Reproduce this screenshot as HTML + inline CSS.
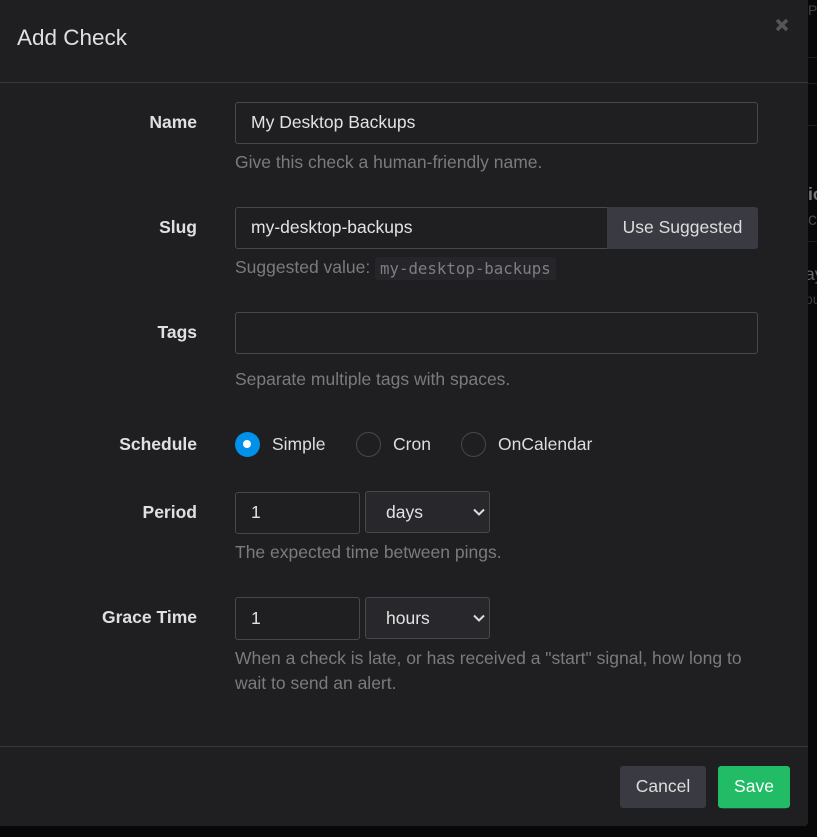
<!DOCTYPE html>
<html><head><meta charset="utf-8"><style>
html,body{margin:0;padding:0;width:817px;height:837px;overflow:hidden;background:#080808;font-family:"Liberation Sans",sans-serif;font-size:17.5px;color:#ddd}
.a{position:absolute;white-space:nowrap;line-height:24px}
#m{position:absolute;left:0;top:-10px;width:808px;height:836px;background:#1f1f21;border-radius:0 0 4px 0}
.h{position:absolute;left:0;width:808px;height:1px;background:#39393c}
.l{font-weight:bold;right:620px;color:#e0e0e0}
.i{position:absolute;box-sizing:border-box;border:1px solid #48484b;border-radius:3px;height:42px;padding-left:15px;line-height:38px;color:#e2e2e2;background:#1f1f21}
.s{background:#28282c;padding-left:20px;line-height:40px}
.s svg{position:absolute;right:4px;top:15px}
.t{color:#7b7b7e;left:235px;font-size:17.5px}
.r{position:absolute;box-sizing:border-box;width:25px;height:25px;border-radius:50%;border:1px solid #48484b;top:432px}
.b{position:absolute;box-sizing:border-box;height:42px;border-radius:3px;background:#3a3a42;color:#ddd;text-align:center;line-height:41px}
</style></head><body>
<div class="a" style="left:808px;top:-2px;color:#444;font-size:14px">Pr</div>
<div class="h" style="left:808px;width:9px;top:57px;background:#1d1d1d"></div>
<div class="h" style="left:808px;width:9px;top:83px;background:#1d1d1d"></div>
<div class="h" style="left:808px;width:9px;top:125px;background:#1d1d1d"></div>
<div class="a" style="left:808px;top:182px;color:#777;font-weight:bold">ic</div>
<div class="a" style="left:808px;top:207px;color:#444">c</div>
<div class="h" style="left:808px;width:9px;top:241px;background:#1d1d1d"></div>
<div class="a" style="left:805px;top:262px;color:#666;clip-path:inset(0 0 0 3px)">ay</div>
<div class="a" style="left:805px;top:287px;color:#3c3c3c;font-size:14px;clip-path:inset(0 0 0 3px)">ou</div>
<div id="m"></div>
<div class="a" style="left:17px;top:26px;font-size:22.5px;color:#e0e0e0">Add Check</div>
<svg style="position:absolute;left:775px;top:18px" width="14" height="14" viewBox="0 0 14 14"><path d="M2 2 12 12M12 2 2 12" stroke="#555" stroke-width="3.6" fill="none"/></svg>
<div class="h" style="top:82px"></div>

<div class="a l" style="top:110px">Name</div>
<div class="i" style="left:235px;top:102px;width:523px">My Desktop Backups</div>
<div class="a t" style="top:150px">Give this check a human-friendly name.</div>

<div class="a l" style="top:215px">Slug</div>
<div class="i" style="left:235px;top:207px;width:373px;border-radius:3px 0 0 3px">my-desktop-backups</div>
<div class="b" style="left:607px;top:207px;width:151px;border-radius:0 3px 3px 0">Use Suggested</div>
<div class="a t" style="top:255px">Suggested value:</div>
<div class="a" style="left:375px;top:257px;height:23px;width:181px;box-sizing:border-box;padding-left:5px;background:#26262a;border-radius:3px;font-family:'DejaVu Sans Mono','Liberation Mono',monospace;font-size:15.75px;color:#7e7e83">my-desktop-backups</div>

<div class="a l" style="top:320px">Tags</div>
<div class="i" style="left:235px;top:312px;width:523px"></div>
<div class="a t" style="top:367px">Separate multiple tags with spaces.</div>

<div class="a l" style="top:432px">Schedule</div>
<div class="r" style="left:235px;background:#0091ea;border:0"></div>
<div style="position:absolute;left:243px;top:440px;width:8px;height:8px;border-radius:50%;background:#fff"></div>
<div class="a" style="left:272px;top:432px">Simple</div>
<div class="r" style="left:356px"></div>
<div class="a" style="left:393px;top:432px">Cron</div>
<div class="r" style="left:461px"></div>
<div class="a" style="left:498px;top:432px">OnCalendar</div>

<div class="a l" style="top:500px">Period</div>
<div class="i" style="left:235px;top:492px;width:125px">1</div>
<div class="i s" style="left:365px;top:491px;width:125px">days<svg width="12" height="10" viewBox="0 0 12 10"><path d="M1 2.5 6 7.5 11 2.5" stroke="#ddd" stroke-width="2" fill="none"/></svg></div>
<div class="a t" style="top:540px">The expected time between pings.</div>

<div class="a l" style="top:605px">Grace Time</div>
<div class="i" style="left:235px;top:597px;width:125px;height:43px;line-height:40px">1</div>
<div class="i s" style="left:365px;top:597px;width:125px">hours<svg width="12" height="10" viewBox="0 0 12 10"><path d="M1 2.5 6 7.5 11 2.5" stroke="#ddd" stroke-width="2" fill="none"/></svg></div>
<div class="a t" style="top:646px">When a check is late, or has received a "start" signal, how long to</div>
<div class="a t" style="top:671px">wait to send an alert.</div>

<div class="h" style="top:746px"></div>
<div class="b" style="left:620px;top:766px;width:86px">Cancel</div>
<div style="position:absolute;left:722px;top:806px;width:64px;height:3px;background:#1f4a33"></div>
<div class="b" style="left:718px;top:766px;width:72px;background:#22bc66;color:#fff">Save</div>
</body></html>
